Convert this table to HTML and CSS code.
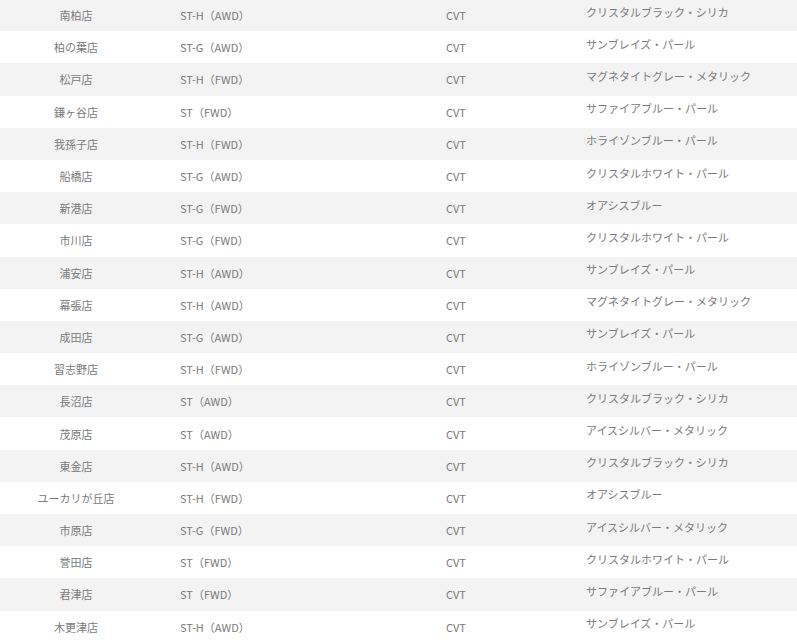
FILE: index.html
```html
<!DOCTYPE html>
<html lang="ja">
<head>
<meta charset="utf-8">
<link rel="stylesheet" href="styles.css">
</head>
<body>
<div class="wrap">
<table class="stock">
<colgroup><col class="c-shop"><col class="c-grade"><col class="c-tm"><col class="c-color"></colgroup>
<tbody>
<tr><td class="shop">南柏店</td><td>ST-H（AWD）</td><td>CVT</td><td class="color">クリスタルブラック・シリカ</td></tr>
<tr><td class="shop">柏の葉店</td><td>ST-G（AWD）</td><td>CVT</td><td class="color">サンブレイズ・パール</td></tr>
<tr><td class="shop">松戸店</td><td>ST-H（FWD）</td><td>CVT</td><td class="color">マグネタイトグレー・メタリック</td></tr>
<tr><td class="shop">鎌ヶ谷店</td><td>ST（FWD）</td><td>CVT</td><td class="color">サファイアブルー・パール</td></tr>
<tr><td class="shop">我孫子店</td><td>ST-H（FWD）</td><td>CVT</td><td class="color">ホライゾンブルー・パール</td></tr>
<tr><td class="shop">船橋店</td><td>ST-G（AWD）</td><td>CVT</td><td class="color">クリスタルホワイト・パール</td></tr>
<tr><td class="shop">新港店</td><td>ST-G（FWD）</td><td>CVT</td><td class="color">オアシスブルー</td></tr>
<tr><td class="shop">市川店</td><td>ST-G（FWD）</td><td>CVT</td><td class="color">クリスタルホワイト・パール</td></tr>
<tr><td class="shop">浦安店</td><td>ST-H（AWD）</td><td>CVT</td><td class="color">サンブレイズ・パール</td></tr>
<tr><td class="shop">幕張店</td><td>ST-H（AWD）</td><td>CVT</td><td class="color">マグネタイトグレー・メタリック</td></tr>
<tr><td class="shop">成田店</td><td>ST-G（AWD）</td><td>CVT</td><td class="color">サンブレイズ・パール</td></tr>
<tr><td class="shop">習志野店</td><td>ST-H（FWD）</td><td>CVT</td><td class="color">ホライゾンブルー・パール</td></tr>
<tr><td class="shop">長沼店</td><td>ST（AWD）</td><td>CVT</td><td class="color">クリスタルブラック・シリカ</td></tr>
<tr><td class="shop">茂原店</td><td>ST（AWD）</td><td>CVT</td><td class="color">アイスシルバー・メタリック</td></tr>
<tr><td class="shop">東金店</td><td>ST-H（AWD）</td><td>CVT</td><td class="color">クリスタルブラック・シリカ</td></tr>
<tr><td class="shop">ユーカリが丘店</td><td>ST-H（FWD）</td><td>CVT</td><td class="color">オアシスブルー</td></tr>
<tr><td class="shop">市原店</td><td>ST-G（FWD）</td><td>CVT</td><td class="color">アイスシルバー・メタリック</td></tr>
<tr><td class="shop">誉田店</td><td>ST（FWD）</td><td>CVT</td><td class="color">クリスタルホワイト・パール</td></tr>
<tr><td class="shop">君津店</td><td>ST（FWD）</td><td>CVT</td><td class="color">サファイアブルー・パール</td></tr>
<tr><td class="shop">木更津店</td><td>ST-H（AWD）</td><td>CVT</td><td class="color">サンブレイズ・パール</td></tr>
</tbody>
</table>
</div>
</body>
</html>
```
FILE: styles.css
```css
html, body {
  margin: 0;
  padding: 0;
  background: #ffffff;
}
body {
  font-family: "Noto Sans CJK JP", "Noto Sans", sans-serif;
  font-size: 11px;
  color: #7a7a7a;
}
.wrap {
  margin-top: -1px;
}
.stock {
  width: 797px;
  border-collapse: collapse;
  table-layout: fixed;
}
.c-shop { width: 152px; }
.c-grade { width: 266px; }
.c-tm { width: 140px; }
.stock tr {
  height: 32.2px;
}
.stock tr:nth-child(odd) {
  background: #f3f3f3;
}
.stock td {
  padding: 0 0 0 28px;
  vertical-align: middle;
  line-height: 16px;
  white-space: nowrap;
}
.stock td.shop {
  padding: 0;
  text-align: center;
}
.stock td.color {
  padding-bottom: 7px;
}
```
